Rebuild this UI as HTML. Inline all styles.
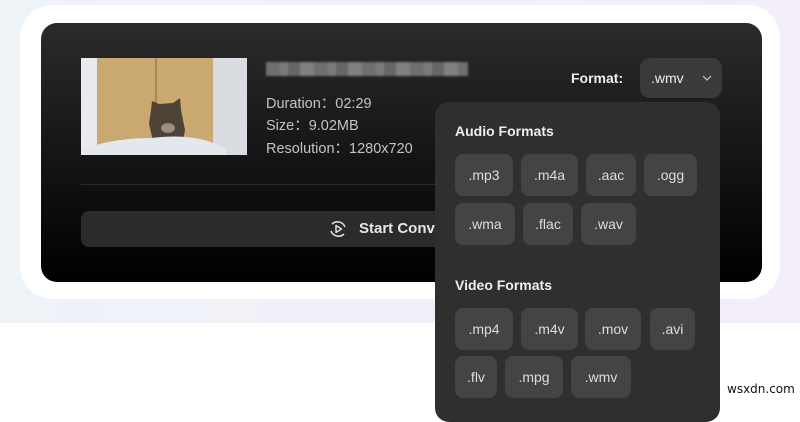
<!DOCTYPE html>
<html><head><meta charset="utf-8"><style>
*{margin:0;padding:0;box-sizing:border-box}
body{width:800px;height:400px;overflow:hidden;background:#fff;font-family:"Liberation Sans",sans-serif;position:relative}
.bg{position:absolute;left:0;top:0;width:800px;height:323px;background:linear-gradient(90deg,#eef3f8,#f3eef9);}
.white{position:absolute;left:20px;top:5px;width:760px;height:294px;background:#fff;border-radius:32px}
.card{position:absolute;left:41px;top:23px;width:721px;height:259px;border-radius:16px;background:linear-gradient(180deg,#2b2b2b,#000)}
.thumb{position:absolute;left:81px;top:58px;width:166px;height:97px;background:#d9dde2;overflow:hidden}
.info{position:absolute;left:266px;color:#c4c4c4;font-size:14.5px}
.blur{position:absolute;left:266px;top:62px;height:14px;width:202px;background:repeating-linear-gradient(90deg,#888 0 14px,#999 14px 22px,#7d7d7d 22px 34px,#a0a0a0 34px 48px);opacity:.75;filter:blur(1px)}
.div{position:absolute;left:81px;top:184px;width:400px;height:1px;background:#2a2a2a}
.btn{position:absolute;left:81px;top:211px;width:420px;height:36px;background:#2b2b2b;border-radius:8px}
.start{position:absolute;left:359px;top:220px;color:#e6e6e6;font-weight:bold;font-size:15px}
.fmt{position:absolute;left:571px;top:70px;color:#eee;font-weight:bold;font-size:14px}
.sel{position:absolute;left:640px;top:58px;width:82px;height:40px;background:#3a3a3a;border-radius:10px;color:#eee;font-size:14px;padding:12px 0 0 11px}
.dd{position:absolute;left:435px;top:102px;width:285px;height:320px;background:#2f2f2f;border-radius:14px}
.h{position:absolute;left:455px;color:#eee;font-weight:bold;font-size:14px}
.b{position:absolute;height:42px;background:#444;border-radius:8px;color:#ddd;font-size:14px;text-align:center;line-height:42px}
.wm{position:absolute;left:727px;top:382px;font-size:12px;color:#111;font-family:"DejaVu Sans",sans-serif}
</style></head><body>
<div class="bg"></div>
<div class="white"></div>
<div class="card"></div>
<div class="thumb">
<div style="position:absolute;left:16px;top:0;width:116px;height:97px;background:#c9a872"></div>
<div style="position:absolute;left:74px;top:0;width:2px;height:97px;background:#a98855"></div>
<div style="position:absolute;left:0;top:0;width:16px;height:97px;background:#e8eaed"></div>
<svg style="position:absolute;left:0;top:0" width="166" height="97"><path d="M70 52 L71 43 L78 46 L92 45 L99 40 L100 52 L104 72 L102 83 L72 83 L68 66 Z" fill="#4e4236"/><ellipse cx="87" cy="70" rx="7" ry="5" fill="#9a8e80"/><path d="M0 92 Q30 80 70 80 Q120 74 145 92 L145 97 L0 97Z" fill="#e4e8ee"/></svg>
</div>
<div class="blur"></div>
<div class="info" style="top:92px">Duration：02:29</div>
<div class="info" style="top:114px">Size：9.02MB</div>
<div class="info" style="top:137px">Resolution：1280x720</div>
<div class="div"></div>
<div class="btn"></div>
<svg style="position:absolute;left:328px;top:219px" width="20" height="20" viewBox="0 0 20 20"><path d="M4 5 A8 8 0 0 1 17 8 M16 15 A8 8 0 0 1 3 12" stroke="#ddd" stroke-width="1.6" fill="none"/><path d="M8 6.5 L13.5 10 L8 13.5Z" stroke="#ddd" stroke-width="1.5" fill="none" stroke-linejoin="round"/></svg>
<div class="start">Start Conv</div>
<div class="fmt">Format:</div>
<div class="sel">.wmv<svg style="position:absolute;left:62px;top:17px" width="10" height="7"><path d="M1 1 L5 5 L9 1" stroke="#bbb" stroke-width="1.3" fill="none"/></svg></div>
<div class="dd"></div>
<div class="h" style="top:123px">Audio Formats</div>
<div class="b" style="left:455px;top:154px;width:58px">.mp3</div>
<div class="b" style="left:521px;top:154px;width:57px">.m4a</div>
<div class="b" style="left:586px;top:154px;width:50px">.aac</div>
<div class="b" style="left:644px;top:154px;width:53px">.ogg</div>
<div class="b" style="left:455px;top:203px;width:60px">.wma</div>
<div class="b" style="left:523px;top:203px;width:50px">.flac</div>
<div class="b" style="left:581px;top:203px;width:55px">.wav</div>
<div class="h" style="top:277px">Video Formats</div>
<div class="b" style="left:455px;top:308px;width:58px">.mp4</div>
<div class="b" style="left:521px;top:308px;width:57px">.m4v</div>
<div class="b" style="left:585px;top:308px;width:56px">.mov</div>
<div class="b" style="left:650px;top:308px;width:45px">.avi</div>
<div class="b" style="left:455px;top:356px;width:42px">.flv</div>
<div class="b" style="left:505px;top:356px;width:58px">.mpg</div>
<div class="b" style="left:571px;top:356px;width:60px">.wmv</div>
<div class="wm">wsxdn.com</div>
</body></html>
